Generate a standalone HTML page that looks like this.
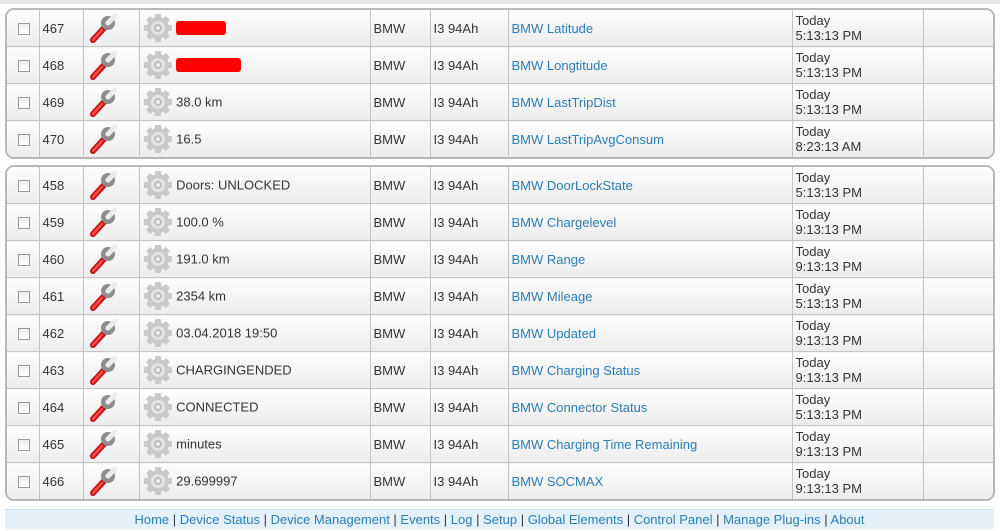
<!DOCTYPE html><html><head><style>
body{margin:0;width:1000px;height:531px;background:#fff;font-family:"Liberation Sans",Tahoma,sans-serif;font-size:13px;color:#333;position:relative;overflow:hidden}
.top{position:absolute;left:0;top:0;width:1000px;height:4px;background:#e6e6e6}
.t{position:absolute;left:5px;width:986px;border:2px solid #b8b8b8;border-radius:9px;overflow:hidden;background:#f2f2f2}
table{border-collapse:collapse;table-layout:fixed;width:986px}
td{height:36px;border-right:1px solid #c4c4c4;border-bottom:1px solid #c4c4c4;padding:0 0 0 3px;background:linear-gradient(#fdfdfd,#ececec);vertical-align:middle;white-space:nowrap;overflow:hidden}
tr:last-child td{border-bottom:none}
td:last-child{border-right:none}
a{color:#2b7db5;text-decoration:none}
.cb{display:inline-block;width:10px;height:10px;border:1px solid #999;background:linear-gradient(#eee,#fff);margin-left:8px;vertical-align:middle}
.red{display:inline-block;vertical-align:middle;height:14px;background:#f00;border-radius:3px}
.v{vertical-align:middle}
.f{position:absolute;left:5px;top:509px;width:989px;height:19px;background:#e4f1fb;border-top:1px solid #cfe2f0;text-align:center;font-size:13px;line-height:19px;color:#333}
svg{vertical-align:middle}
</style></head><body>
<svg width="0" height="0" style="position:absolute"><defs>
<g id="w"><path d="M6 27 L17 15" stroke="#c21010" stroke-width="6" stroke-linecap="round"/><path d="M6 27 L15 17" stroke="#ff4b4b" stroke-width="2.5" stroke-linecap="round"/><circle cx="21" cy="10" r="7" fill="#8d8d8d"/><path d="M21 10 L28 3" stroke="#ececec" stroke-width="5" stroke-linecap="round"/><circle cx="21" cy="10" r="2.5" fill="#ececec"/></g>
<g id="g"><g fill="#c9c9c9"><circle cx="15" cy="15" r="11"/><rect x="12" y="1" width="6" height="28" rx="1"/><rect x="1" y="12" width="28" height="6" rx="1"/><rect x="12" y="1" width="6" height="28" rx="1" transform="rotate(45 15 15)"/><rect x="12" y="1" width="6" height="28" rx="1" transform="rotate(-45 15 15)"/></g><circle cx="15" cy="15" r="7" fill="#e4e4e4"/><circle cx="15" cy="15" r="4" fill="#bdbdbd"/><circle cx="15" cy="15" r="2" fill="#eee"/></g>
</defs></svg>
<div class="top"></div>
<div class="t" style="top:8px">
<table><colgroup><col style="width:32px"><col style="width:44px"><col style="width:56px"><col style="width:231px"><col style="width:60px"><col style="width:78px"><col style="width:284px"><col style="width:131px"><col style="width:70px"></colgroup>
<tr><td><span class="cb"></span></td><td>467</td><td><svg width="30" height="30"><use href="#w"/></svg></td><td><svg width="30" height="30"><use href="#g"/></svg> <span class="red" style="width:50px"></span></td><td>BMW</td><td>I3 94Ah</td><td><a>BMW Latitude</a></td><td>Today<br>5:13:13 PM</td><td></td></tr>
<tr><td><span class="cb"></span></td><td>468</td><td><svg width="30" height="30"><use href="#w"/></svg></td><td><svg width="30" height="30"><use href="#g"/></svg> <span class="red" style="width:65px"></span></td><td>BMW</td><td>I3 94Ah</td><td><a>BMW Longtitude</a></td><td>Today<br>5:13:13 PM</td><td></td></tr>
<tr><td><span class="cb"></span></td><td>469</td><td><svg width="30" height="30"><use href="#w"/></svg></td><td><svg width="30" height="30"><use href="#g"/></svg> <span class="v">38.0 km</span></td><td>BMW</td><td>I3 94Ah</td><td><a>BMW LastTripDist</a></td><td>Today<br>5:13:13 PM</td><td></td></tr>
<tr><td><span class="cb"></span></td><td>470</td><td><svg width="30" height="30"><use href="#w"/></svg></td><td><svg width="30" height="30"><use href="#g"/></svg> <span class="v">16.5</span></td><td>BMW</td><td>I3 94Ah</td><td><a>BMW LastTripAvgConsum</a></td><td>Today<br>8:23:13 AM</td><td></td></tr>
</table></div>
<div class="t" style="top:165px">
<table><colgroup><col style="width:32px"><col style="width:44px"><col style="width:56px"><col style="width:231px"><col style="width:60px"><col style="width:78px"><col style="width:284px"><col style="width:131px"><col style="width:70px"></colgroup>
<tr><td><span class="cb"></span></td><td>458</td><td><svg width="30" height="30"><use href="#w"/></svg></td><td><svg width="30" height="30"><use href="#g"/></svg> <span class="v">Doors: UNLOCKED</span></td><td>BMW</td><td>I3 94Ah</td><td><a>BMW DoorLockState</a></td><td>Today<br>5:13:13 PM</td><td></td></tr>
<tr><td><span class="cb"></span></td><td>459</td><td><svg width="30" height="30"><use href="#w"/></svg></td><td><svg width="30" height="30"><use href="#g"/></svg> <span class="v">100.0 %</span></td><td>BMW</td><td>I3 94Ah</td><td><a>BMW Chargelevel</a></td><td>Today<br>9:13:13 PM</td><td></td></tr>
<tr><td><span class="cb"></span></td><td>460</td><td><svg width="30" height="30"><use href="#w"/></svg></td><td><svg width="30" height="30"><use href="#g"/></svg> <span class="v">191.0 km</span></td><td>BMW</td><td>I3 94Ah</td><td><a>BMW Range</a></td><td>Today<br>9:13:13 PM</td><td></td></tr>
<tr><td><span class="cb"></span></td><td>461</td><td><svg width="30" height="30"><use href="#w"/></svg></td><td><svg width="30" height="30"><use href="#g"/></svg> <span class="v">2354 km</span></td><td>BMW</td><td>I3 94Ah</td><td><a>BMW Mileage</a></td><td>Today<br>5:13:13 PM</td><td></td></tr>
<tr><td><span class="cb"></span></td><td>462</td><td><svg width="30" height="30"><use href="#w"/></svg></td><td><svg width="30" height="30"><use href="#g"/></svg> <span class="v">03.04.2018 19:50</span></td><td>BMW</td><td>I3 94Ah</td><td><a>BMW Updated</a></td><td>Today<br>9:13:13 PM</td><td></td></tr>
<tr><td><span class="cb"></span></td><td>463</td><td><svg width="30" height="30"><use href="#w"/></svg></td><td><svg width="30" height="30"><use href="#g"/></svg> <span class="v">CHARGINGENDED</span></td><td>BMW</td><td>I3 94Ah</td><td><a>BMW Charging Status</a></td><td>Today<br>9:13:13 PM</td><td></td></tr>
<tr><td><span class="cb"></span></td><td>464</td><td><svg width="30" height="30"><use href="#w"/></svg></td><td><svg width="30" height="30"><use href="#g"/></svg> <span class="v">CONNECTED</span></td><td>BMW</td><td>I3 94Ah</td><td><a>BMW Connector Status</a></td><td>Today<br>5:13:13 PM</td><td></td></tr>
<tr><td><span class="cb"></span></td><td>465</td><td><svg width="30" height="30"><use href="#w"/></svg></td><td><svg width="30" height="30"><use href="#g"/></svg> <span class="v">minutes</span></td><td>BMW</td><td>I3 94Ah</td><td><a>BMW Charging Time Remaining</a></td><td>Today<br>9:13:13 PM</td><td></td></tr>
<tr><td><span class="cb"></span></td><td>466</td><td><svg width="30" height="30"><use href="#w"/></svg></td><td><svg width="30" height="30"><use href="#g"/></svg> <span class="v">29.699997</span></td><td>BMW</td><td>I3 94Ah</td><td><a>BMW SOCMAX</a></td><td>Today<br>9:13:13 PM</td><td></td></tr>
</table></div>
<div class="f"><a>Home</a> | <a>Device Status</a> | <a>Device Management</a> | <a>Events</a> | <a>Log</a> | <a>Setup</a> | <a>Global Elements</a> | <a>Control Panel</a> | <a>Manage Plug-ins</a> | <a>About</a></div>
</body></html>
